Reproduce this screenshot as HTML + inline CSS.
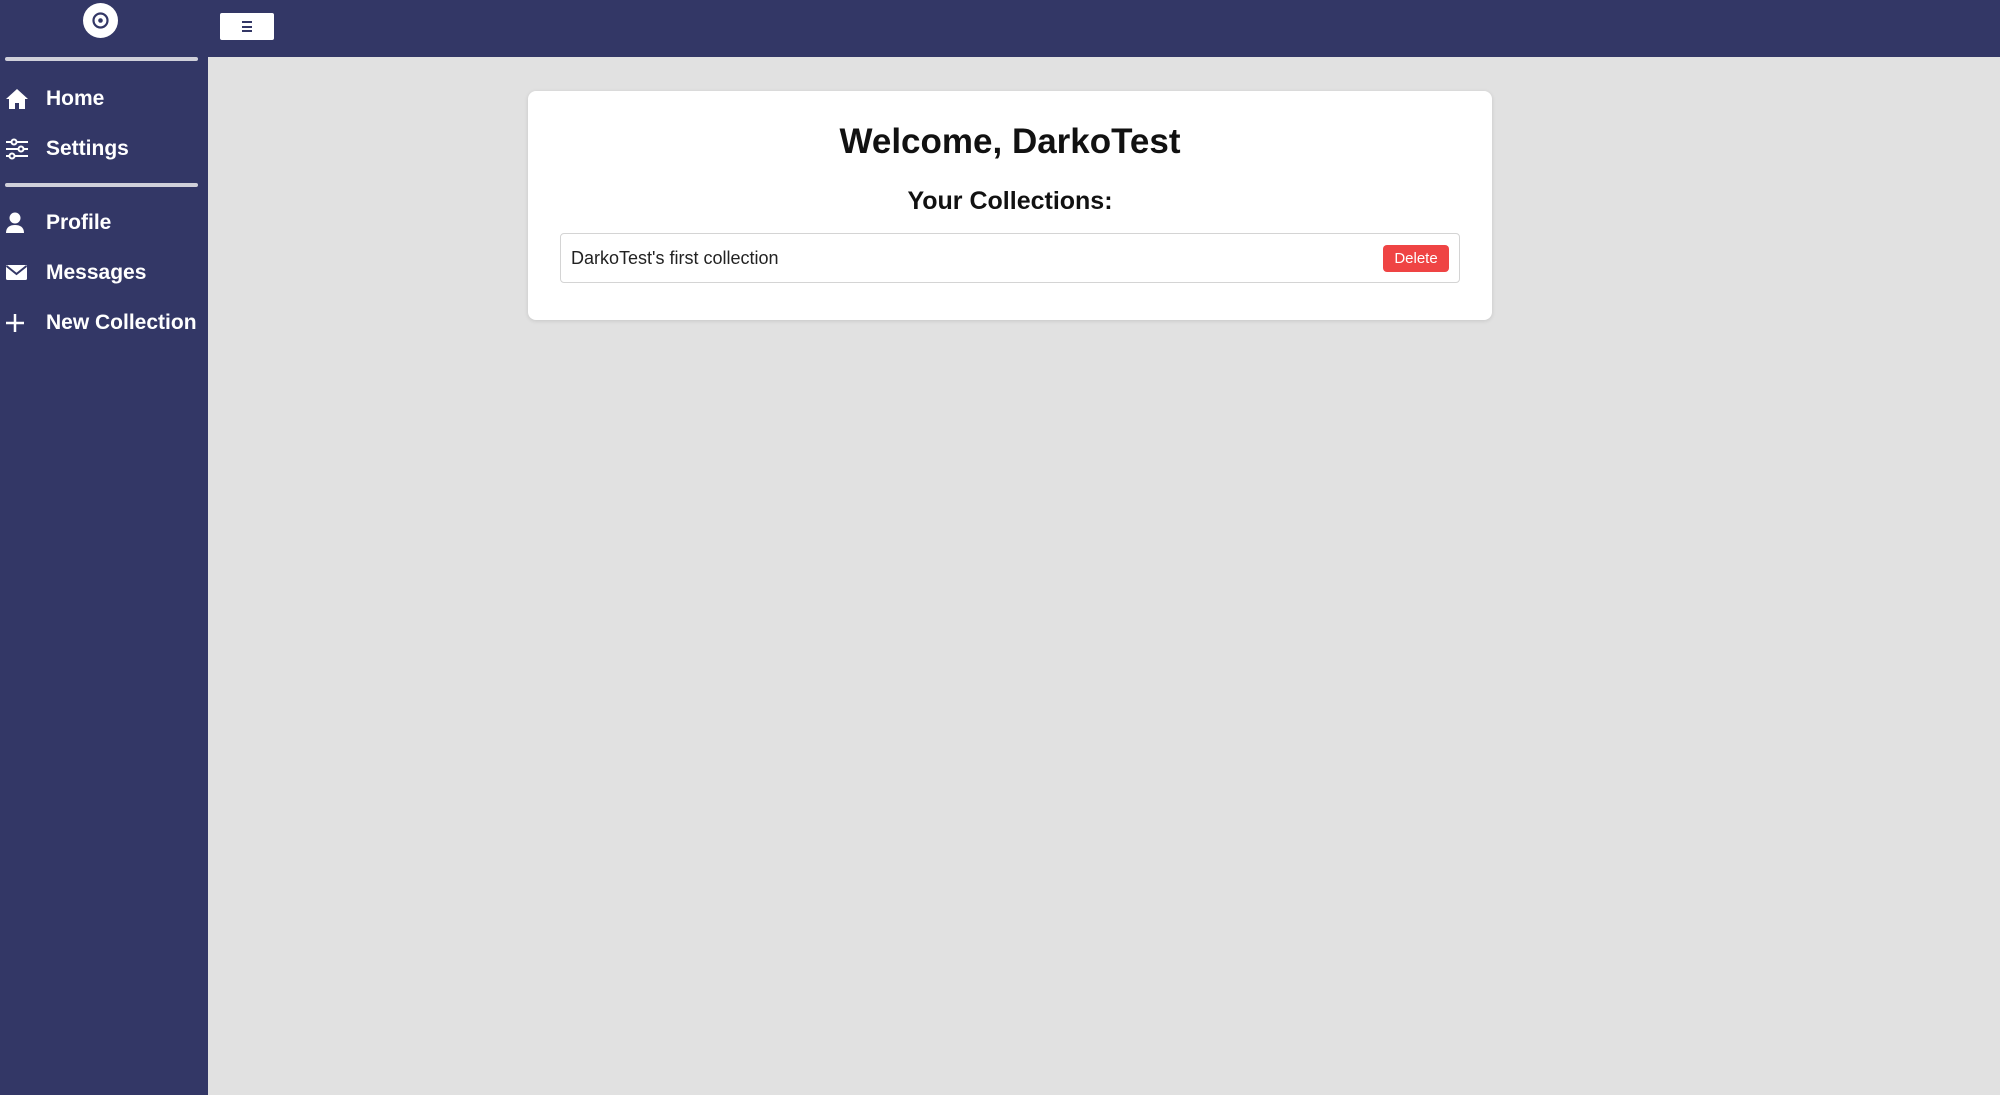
<!DOCTYPE html>
<html><head><meta charset="utf-8"><style>
*{box-sizing:border-box;margin:0;padding:0}
body{width:2000px;height:1095px;background:#e1e1e1;font-family:"Liberation Sans",sans-serif;position:relative;overflow:hidden}
.top{position:absolute;left:0;top:0;width:2000px;height:57px;background:#333766}
.side{position:absolute;left:0;top:0;width:208px;height:1095px;background:#333766}
.logo{position:absolute;left:83px;top:3px;width:35px;height:35px;border-radius:50%;background:#fff}
.menu{position:absolute;left:220px;top:13px;width:54px;height:27px;background:#fff;border-radius:2px}
.menu span{position:absolute;left:22px;width:10px;height:2px;background:#333766}
.div{position:absolute;left:5px;width:193px;height:4px;background:#d0d0da;border-radius:2px}
.nav{position:absolute;left:0;height:30px;color:#fff;font-weight:bold;font-size:21px;line-height:30px}
.nav svg{position:absolute;left:5px;top:4px}
.nav b{position:absolute;left:46px;white-space:nowrap}
.card{position:absolute;left:528px;top:91px;width:964px;height:229px;background:#fff;border-radius:8px;box-shadow:0 1px 4px rgba(0,0,0,.12)}
h1{position:absolute;left:0;width:100%;top:31px;text-align:center;font-size:35px;font-weight:bold;color:#111}
h2{position:absolute;left:0;width:100%;top:96px;text-align:center;font-size:25px;font-weight:bold;color:#111}
.item{position:absolute;left:32px;top:142px;width:900px;height:50px;border:1px solid #d4d4d4;border-radius:4px;background:#fff}
.item span{position:absolute;left:10px;top:14px;font-size:18px;color:#222}
.del{position:absolute;left:822px;top:11px;width:66px;height:27px;background:#ef4444;color:#fff;border-radius:4px;font-size:15px;text-align:center;line-height:27px}
</style></head><body>
<div class="top"></div>
<div class="side"></div>
<div class="logo"><svg width="35" height="35"><circle cx="17.5" cy="17.5" r="7" fill="none" stroke="#333766" stroke-width="2.2"/><circle cx="17.5" cy="17.5" r="2.3" fill="#333766"/></svg></div>
<div class="menu"><span style="top:8px"></span><span style="top:12.5px"></span><span style="top:17px"></span></div>
<div class="div" style="top:57px"></div>
<div class="div" style="top:183px"></div>
<div class="nav" style="top:84px"><svg width="24" height="22" viewBox="0 0 24 22"><path d="M12 1L1 11h3v10h6v-6h4v6h6V11h3z" fill="#fff"/></svg><b>Home</b></div>
<div class="nav" style="top:134px"><svg width="24" height="22" viewBox="0 0 24 22" fill="none" stroke="#fff" stroke-width="2"><path d="M1 4h22M1 11h22M1 18h22"/><circle cx="9" cy="4" r="2.5" fill="#333766"/><circle cx="16" cy="11" r="2.5" fill="#333766"/><circle cx="7" cy="18" r="2.5" fill="#333766"/></svg><b>Settings</b></div>
<div class="nav" style="top:208px"><svg width="24" height="22" viewBox="0 0 24 22"><circle cx="10" cy="6" r="5.5" fill="#fff"/><path d="M1 21c0-6 4-8 9-8s9 2 9 8z" fill="#fff"/></svg><b>Profile</b></div>
<div class="nav" style="top:258px"><svg width="24" height="22" viewBox="0 0 24 22"><rect x="1" y="3" width="21" height="15" rx="1.5" fill="#fff"/><path d="M1.5 4l10 8 10-8" fill="none" stroke="#333766" stroke-width="2"/></svg><b>Messages</b></div>
<div class="nav" style="top:308px"><svg width="24" height="22" viewBox="0 0 24 22"><path d="M10 2v18M1 11h18" stroke="#fff" stroke-width="2.5"/></svg><b>New Collection</b></div>
<div class="card">
<h1>Welcome, DarkoTest</h1>
<h2>Your Collections:</h2>
<div class="item"><span>DarkoTest's first collection</span><div class="del">Delete</div></div>
</div>
</body></html>
